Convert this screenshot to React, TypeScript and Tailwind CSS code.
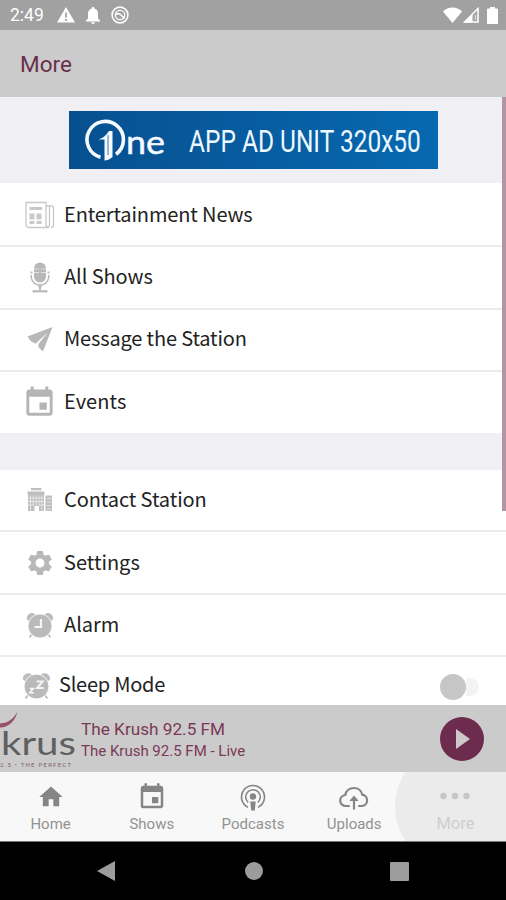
import { useState } from 'react';
import { MdEvent, MdHome, MdSettings } from 'react-icons/md';

const NewsIcon = () => (
  <svg width="30" height="30" viewBox="0 0 30 30" fill="none" stroke="#c9c9c9" strokeWidth="1.3" className="shrink-0">
    <path d="M21 3.500v20c0 2.500 1.200 4 3 4H4c-1.800 0-3-1.200-3-3V2.500h20z" />
    <path d="M21 6h5.500c1.300 0 2 .7 2 2v17c0 1.500-1 2.500-2.500 2.500M24.500 6v18.500c0 2-1 3-2.500 3" />
    <path d="M4.500 8.500h12.500" strokeWidth="3" />
    <path d="M4.500 15h5M4.500 18h5M4.500 22.500h5M11.500 15h5M11.500 18h5M11.500 22.500h5" strokeWidth="3" />
  </svg>
);

const MicIcon = () => (
  <svg width="30" height="32" viewBox="0 0 30 32" fill="none" stroke="#bababa" className="shrink-0">
    <rect x="9" y="1.500" width="12" height="20" rx="6" fill="#b8b8b8" stroke="none" />
    <path d="M9 8h5M16 8h5M9 11.500h5M16 11.500h5" stroke="#e4e4e4" strokeWidth="1.200" />
    <path d="M6.500 10.500v2M23.500 10.500v2" strokeWidth="2" />
    <path d="M6 14c0 6.500 4 10 9 10s9-3.500 9-10" strokeWidth="1.500" />
    <path d="M15 24v5" strokeWidth="2" />
    <path d="M12.500 24.500h5L15 28z" fill="#bababa" stroke="none" />
    <path d="M7.500 30.300h15" strokeWidth="2.200" />
  </svg>
);

const SendIcon = () => (
  <svg width="30" height="30" viewBox="0 0 30 30" fill="#b8b8b8" className="shrink-0">
    <path d="M27.500 3 2.500 12.500l3 4.500 5 2.800L22.500 8.500 13.500 20v3.500l4.500 4z" />
  </svg>
);

const BuildingIcon = () => (
  <svg width="30" height="30" viewBox="0 0 30 30" fill="#bfbfbf" className="shrink-0">
    <path d="M6 3h10.500v2.200H6zM2.500 6.500h17v3h-17zM3 9h16v17h-5v-5h-4.500v5H3zM20.500 10.500H27V26h-6.500z" />
    <path d="M5.500 10.500v15M8.300 10.500v10M11.200 10.500v10M14 10.500v10M16.800 10.500v15M3 13h16M3 16.500h16M3 20h6M14 20h5M22 13.500h4M22 17h4M22 20.500h4M22 24h4" fill="none" stroke="#ededed" strokeWidth=".8" />
  </svg>
);

const ClockIcon = ({ sleep = false }: { sleep?: boolean }) => (
  <svg width={sleep ? 31 : 30} height={sleep ? 31 : 30} viewBox="0 0 30 30" fill="none" className="shrink-0">
    <path d="M2 9.500C1.200 6 4.500 2.500 8 3.200l3 1.300-7 6.500zM28 9.500c.8-3.500-2.500-7-6-6.300l-3 1.300 7 6.500z" fill="#bcbcbc" />
    <path d="m7 24-2.500 3.500M23 24l2.500 3.500" stroke="#b8b8b8" strokeWidth="1.600" />
    <circle cx="15" cy="16" r="12" fill="#bababa" stroke="#fff" strokeWidth=".8" />
    {sleep ? (
      <g stroke="#f5f5f5">
        <path d="M15 11h6l-5.500 6.500h6.500" strokeWidth="1.900" />
        <path d="M8.500 18h3.500l-3.500 4h4" strokeWidth="1.500" />
      </g>
    ) : (
      <path d="M16 9v8H9.500" stroke="#f5f5f5" strokeWidth="2.200" />
    )}
  </svg>
);

const PodcastIcon = () => (
  <svg width="28" height="28" viewBox="0 0 28 28" fill="none" stroke="#858585" strokeWidth="1.600">
    <path d="M9 24.300A11.500 11.500 0 1 1 19 24.300" />
    <path d="M9.200 19.500A7.300 7.300 0 1 1 18.800 19.500" />
    <circle cx="14" cy="13.500" r="3.200" fill="#858585" stroke="none" />
    <path d="M11.300 18.500h5.400l-.9 9h-3.600z" fill="#858585" stroke="none" />
  </svg>
);

const UploadIcon = () => (
  <svg width="30" height="24" viewBox="0 0 30 24" fill="none" stroke="#858585" strokeWidth="2.200" className="mt-[2px]">
    <path d="M10 20H7a5.500 5.500 0 0 1-.7-11C7 4.800 10.500 2 15 2c4.200 0 7.500 2.800 8.300 6.700A5.700 5.700 0 0 1 23 20h-3" strokeLinecap="round" />
    <path d="M15 23.500V12" />
    <path d="m10.300 15 4.700-5.500 4.700 5.500z" fill="#858585" stroke="none" />
  </svg>
);

const DotsIcon = () => (
  <svg width="32" height="8" viewBox="0 0 32 8" fill="#c6c6c6" className="-mt-[3px]">
    <circle cx="4.500" cy="4" r="3.200" />
    <circle cx="16" cy="4" r="3.200" />
    <circle cx="27.500" cy="4" r="3.200" />
  </svg>
);

const stationItems = [
  { label: 'Entertainment News', icon: <NewsIcon />, spacing: 'tracking-[-0.13px]' },
  { label: 'All Shows', icon: <MicIcon />, spacing: 'tracking-[-0.08px]' },
  { label: 'Message the Station', icon: <SendIcon />, spacing: 'tracking-[-0.16px]' },
  { label: 'Events', icon: <MdEvent size={35} color="#b5b5b5" className="mt-[2px] shrink-0" />, spacing: 'tracking-[0.1px]' },
];

const appItems = [
  { label: 'Contact Station', icon: <BuildingIcon />, spacing: 'tracking-[-0.1px]' },
  { label: 'Settings', icon: <MdSettings size={30} color="#b8b8b8" className="shrink-0" />, spacing: 'tracking-normal' },
  { label: 'Alarm', icon: <ClockIcon />, spacing: 'tracking-normal' },
];

const tabs = [
  { label: 'Home', icon: <MdHome size={28} color="#858585" /> },
  { label: 'Shows', icon: <MdEvent size={30} color="#858585" /> },
  { label: 'Podcasts', icon: <PodcastIcon /> },
  { label: 'Uploads', icon: <UploadIcon /> },
  { label: 'More', icon: <DotsIcon /> },
];

type Item = { label: string; icon: React.ReactNode; spacing: string };

const MenuRow = ({ item, border }: { item: Item; border: string }) => (
  <div className={`flex h-[62.4px] shrink-0 items-center border-[#ebebed] bg-white pl-6 ${border}`}>
    <div className="flex w-[31px] shrink-0 items-center justify-center">{item.icon}</div>
    <span className={`ml-[9px] pb-[2px] text-[20px] leading-none whitespace-nowrap ${item.spacing}`}>{item.label}</span>
  </div>
);

const AdBanner = () => (
  <div className="flex h-[58px] w-[369px] items-center overflow-hidden bg-linear-to-r from-[#07508f] to-[#0769b1]">
    <svg width="100" height="58" viewBox="0 0 100 58" fill="none" stroke="#f4faff" className="shrink-0">
      <path d="M31.500 46.200A18.200 18.200 0 1 1 47 43.300" strokeWidth="3.600" />
      <path d="M29.500 28.500c4.500-1.500 7.500-4 10.500-8.500h3.500v26c-2 2-5 3.300-8 3.500V28.500z" fill="#f4faff" stroke="none" />
      <path d="M39 24v20" stroke="#0a5596" strokeWidth=".8" />
      <text x="57" y="42.500" fill="#f4faff" stroke="#f4faff" strokeWidth=".5" fontSize="33" fontFamily="Lato, sans-serif" textLength="39" lengthAdjust="spacingAndGlyphs">ne</text>
    </svg>
    <div className="w-[20px] shrink-0" />
    <span className="mt-px origin-left scale-x-[0.765] font-[Roboto] text-[32px] leading-none whitespace-nowrap text-[#edf8ff]">APP AD UNIT 320x50</span>
  </div>
);

const StatusBar = () => (
  <div className="flex h-[30px] shrink-0 items-center bg-[#a1a1a1] text-white">
    <span className="ml-[10px] w-[34px] pt-px font-[Roboto] text-[17.500px] leading-none">2:49</span>
    <svg width="18" height="16" viewBox="0 0 18 16" className="ml-[13px]">
      <path d="M9 0 18 15.500H0z" fill="#fff" />
      <path d="M9 5.500v5M9 12v2" stroke="#999" strokeWidth="1.600" />
    </svg>
    <svg width="14" height="17" viewBox="0 0 14 17" fill="#fff" className="ml-[11px]">
      <path d="M7 0c1 0 1.300.7 1.300 1.600C11 2.300 12 4.500 12 7v4.500l2 2V14.500H0v-1l2-2V7c0-2.500 1-4.700 3.700-5.400C5.700.7 6 0 7 0zM5 15.200h4c0 1-1 1.700-2 1.700s-2-.7-2-1.700z" />
    </svg>
    <svg width="18" height="18" viewBox="0 0 18 18" fill="none" stroke="#fff" className="ml-[11px]">
      <circle cx="9" cy="9" r="7.900" strokeWidth="1.600" />
      <circle cx="9" cy="9" r="4.700" strokeWidth="1.300" />
      <path d="M5 8.500c2-1.500 3.500-1 5 .5l3.500 3.500" strokeWidth="1.700" />
    </svg>
    <div className="ml-auto flex items-center pr-[8px]">
      <svg width="19" height="16" viewBox="0 0 19 16" fill="#fff">
        <path d="M9.500 16 0 4.500C5-.8 14-.8 19 4.500z" />
      </svg>
      <svg width="16" height="16" viewBox="0 0 16 16" fill="none" stroke="#fff" className="ml-[1px]">
        <path d="M15 1.500V15H1.500z" strokeWidth="1.500" />
        <path d="M9 8v7H1.500z" fill="#fff" strokeWidth="1" />
        <path d="M12.500 8v5" stroke="#d5d5d5" strokeWidth="1.500" />
      </svg>
      <svg width="11" height="17" viewBox="0 0 11 17" fill="#fff" className="ml-[8px]">
        <path d="M3 0h5v1.500h2c.6 0 1 .4 1 1v13.500c0 .6-.4 1-1 1H1c-.6 0-1-.4-1-1V2.500c0-.6.400-1 1-1h2z" />
      </svg>
    </div>
  </div>
);

const StationLogo = () => (
  <svg width="75" height="67" viewBox="0 0 75 67" className="shrink-0">
    <path d="M-2 22.500C8 23.500 15.500 16 17.500 6.500 13 14.500 8 18.500-2 18.500z" fill="#97506a" />
    <text x="1" y="49.500" fontSize="32" fill="#5f5f5f" fontFamily="Lato, sans-serif" textLength="75" lengthAdjust="spacingAndGlyphs">krus</text>
    <text x="0" y="62" fontSize="6" fill="#7b6069" fontFamily="Roboto, sans-serif" textLength="71">2.5 • THE PERFECT</text>
  </svg>
);

const App: React.FC = () => {
  const [sleepMode, setSleepMode] = useState(false);

  return (
    <div className="flex h-[900px] w-[506px] flex-col overflow-hidden bg-black font-['Noto_Sans_CJK_SC',sans-serif] text-[#222]">
      <StatusBar />
      <header className="flex h-[67px] shrink-0 items-center bg-[#cbcbcb] pt-[2px] pl-[20px]">
        <h1 className="font-[Roboto] text-[22.500px] leading-none text-[#69304c]">More</h1>
      </header>

      <main className="relative flex h-[608px] shrink-0 flex-col overflow-hidden bg-[#efeff4]">
        <div className="flex h-[86px] shrink-0 items-center pl-[69px]">
          <AdBanner />
        </div>
        {stationItems.map((item, i) => (
          <MenuRow key={item.label} item={item} border={i === 0 ? 'pt-px' : 'border-t-2 pb-[1.600px]'} />
        ))}
        <div className="h-[37.400px] shrink-0" />
        {appItems.map((item) => (
          <MenuRow key={item.label} item={item} border="border-b-2" />
        ))}
        <div className="flex h-[62px] shrink-0 items-center bg-white pb-[6px] pl-[21px]">
          <ClockIcon sleep />
          <span className="ml-[7px] pb-[2px] text-[20px] leading-none tracking-[-0.25px]">Sleep Mode</span>
          <button
            type="button"
            role="switch"
            aria-checked={sleepMode}
            aria-label="Sleep Mode"
            onClick={() => setSleepMode(!sleepMode)}
            className="mt-[4px] mr-[27px] ml-auto flex h-[26px] w-[39px] items-center"
          >
            <span className="size-[26px] shrink-0 rounded-full bg-[#c6c6c6]" />
            <span className="h-[18px] w-[13px] rounded-r-full bg-[#f3f3f3]" />
          </button>
        </div>
        <div className="absolute top-0 right-0 h-[414px] w-[4px] bg-[#b295a5]" />
      </main>

      <section className="flex h-[67px] shrink-0 items-center bg-[#cbcbcb] font-[Roboto] text-[#7b3955]">
        <StationLogo />
        <div className="mt-[3px] ml-[6px] flex flex-col whitespace-nowrap">
          <span className="text-[17.200px] leading-[22px]">The Krush 92.5 FM</span>
          <span className="text-[15px] leading-[22px]">The Krush 92.5 FM - Live</span>
        </div>
        <button type="button" aria-label="Play" className="mr-[22px] ml-auto flex size-[44px] items-center justify-center rounded-full bg-[#6d2c4e]">
          <svg width="14" height="20" viewBox="0 0 14 20" fill="#d0c9cc" className="ml-[2px]">
            <path d="M0 0 14 10 0 20z" />
          </svg>
        </button>
      </section>

      <nav className="relative flex h-[69px] shrink-0 overflow-hidden bg-[#f8f8f8] font-[Roboto] text-[#929292]">
        <div className="absolute -top-[27px] left-[395px] size-[123px] rounded-full bg-[#ebebeb]" />
        <div className="absolute top-0 right-0 h-full w-[50px] bg-[#ebebeb]" />
        {tabs.map((tab) => (
          <div key={tab.label} className={`relative flex flex-1 flex-col items-center ${tab.label === 'More' ? 'text-[#cfcfcf]' : ''}`}>
            <div className="mt-[10px] flex h-[30px] items-center justify-center">{tab.icon}</div>
            <span className={`mt-[4px] leading-[16px] ${tab.label === 'More' ? 'text-[16.500px]' : 'text-[15px]'}`}>{tab.label}</span>
          </div>
        ))}
      </nav>

      <div className="flex h-[59px] shrink-0 items-center border-t border-[#777] bg-black">
        <svg width="18" height="20" viewBox="0 0 18 20" fill="#9c9c9c" className="ml-[97px]">
          <path d="M18 0v20L0 10z" />
        </svg>
        <div className="ml-[130px] size-[18px] rounded-full bg-[#9c9c9c]" />
        <div className="ml-[127px] size-[19px] rounded-[1px] bg-[#9c9c9c]" />
      </div>
    </div>
  );
};

export default App;
